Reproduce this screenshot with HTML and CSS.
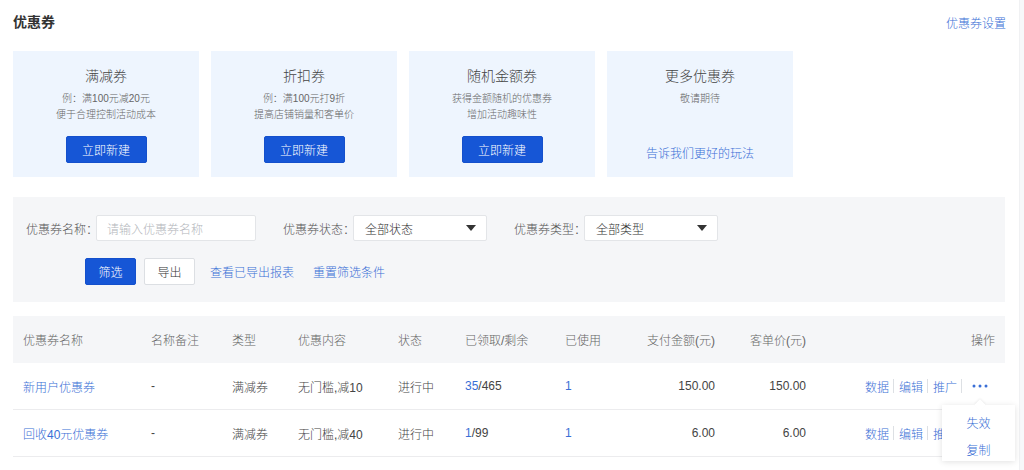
FILE: index.html
```html
<!DOCTYPE html>
<html lang="zh-CN">
<head>
<meta charset="utf-8">
<title>优惠券</title>
<link rel="stylesheet" href="styles.css">
</head>
<body>
<div class="page">
  <main class="main">
    <header class="head">
      <h1 class="title">优惠券</h1>
      <a class="link settings">优惠券设置</a>
    </header>

    <section class="cards">
      <div class="card">
        <div class="card-title">满减券</div>
        <div class="card-desc">例：满100元减20元<br>便于合理控制活动成本</div>
        <button class="btn-primary card-btn">立即新建</button>
      </div>
      <div class="card">
        <div class="card-title">折扣券</div>
        <div class="card-desc">例：满100元打9折<br>提高店铺销量和客单价</div>
        <button class="btn-primary card-btn">立即新建</button>
      </div>
      <div class="card">
        <div class="card-title">随机金额券</div>
        <div class="card-desc">获得金额随机的优惠券<br>增加活动趣味性</div>
        <button class="btn-primary card-btn">立即新建</button>
      </div>
      <div class="card">
        <div class="card-title">更多优惠券</div>
        <div class="card-desc">敬请期待</div>
        <a class="link card-link">告诉我们更好的玩法</a>
      </div>
    </section>

    <section class="filter">
      <div class="filter-row">
        <label class="field">
          <span class="field-label">优惠券名称<span class="colon">：</span></span>
          <span class="input placeholder">请输入优惠券名称</span>
        </label>
        <label class="field">
          <span class="field-label">优惠券状态<span class="colon">：</span></span>
          <span class="select">全部状态<i class="caret"></i></span>
        </label>
        <label class="field">
          <span class="field-label">优惠券类型<span class="colon">：</span></span>
          <span class="select">全部类型<i class="caret"></i></span>
        </label>
      </div>
      <div class="action-row">
        <button class="btn-primary btn-sm">筛选</button>
        <button class="btn-default btn-sm">导出</button>
        <a class="link act-link">查看已导出报表</a>
        <a class="link act-link reset">重置筛选条件</a>
      </div>
    </section>

    <section class="table">
      <div class="tr th">
        <div class="td c1">优惠券名称</div>
        <div class="td c2">名称备注</div>
        <div class="td c3">类型</div>
        <div class="td c4">优惠内容</div>
        <div class="td c5">状态</div>
        <div class="td c6">已领取/剩余</div>
        <div class="td c7">已使用</div>
        <div class="td c8 num">支付金额(元)</div>
        <div class="td c9 num">客单价(元)</div>
        <div class="td c10 num">操作</div>
      </div>
      <div class="tr">
        <div class="td c1"><a class="link">新用户优惠券</a></div>
        <div class="td c2">-</div>
        <div class="td c3">满减券</div>
        <div class="td c4">无门槛,减10</div>
        <div class="td c5">进行中</div>
        <div class="td c6"><a class="link">35</a>/465</div>
        <div class="td c7"><a class="link">1</a></div>
        <div class="td c8 num">150.00</div>
        <div class="td c9 num">150.00</div>
        <div class="td c10 ops">
          <a class="link">数据</a><span class="sep"></span>
          <a class="link">编辑</a><span class="sep"></span>
          <a class="link">推广</a><span class="sep"></span>
          <span class="more">
            <svg width="16" height="4" viewBox="0 0 16 4"><circle cx="2" cy="2" r="1.5"/><circle cx="8" cy="2" r="1.5"/><circle cx="14" cy="2" r="1.5"/></svg>
            <span class="menu">
              <a class="menu-item">失效</a>
              <a class="menu-item">复制</a>
            </span>
          </span>
        </div>
      </div>
      <div class="tr">
        <div class="td c1"><a class="link">回收40元优惠券</a></div>
        <div class="td c2">-</div>
        <div class="td c3">满减券</div>
        <div class="td c4">无门槛,减40</div>
        <div class="td c5">进行中</div>
        <div class="td c6"><a class="link">1</a>/99</div>
        <div class="td c7"><a class="link">1</a></div>
        <div class="td c8 num">6.00</div>
        <div class="td c9 num">6.00</div>
        <div class="td c10 ops">
          <a class="link">数据</a><span class="sep"></span>
          <a class="link">编辑</a><span class="sep"></span>
          <a class="link">推广</a><span class="sep"></span>
          <span class="more more-hidden">
            <svg width="16" height="4" viewBox="0 0 16 4"><circle cx="2" cy="2" r="1.5"/><circle cx="8" cy="2" r="1.5"/><circle cx="14" cy="2" r="1.5"/></svg>
          </span>
        </div>
      </div>
    </section>
  </main>
  <div class="gutter"></div>
</div>
</body>
</html>
```

FILE: styles.css
```css
* { box-sizing: border-box; }
html, body { margin: 0; padding: 0; background: #fff; }
body {
  font-family: "Liberation Sans", "Noto Sans CJK SC", sans-serif;
  font-size: 12px;
  font-weight: 300;
  color: #444;
  overflow: hidden;
}
.page { display: flex; width: 1024px; height: 470px; }
.main { width: 1019px; padding: 0 14px 0 13px; }
.gutter { width: 5px; background: #f7f8fa; border-left: 1px solid #f0f1f3; }

.link { color: #3a6fd6; text-decoration: none; cursor: pointer; }

.head {
  height: 44px;
  display: flex;
  align-items: center;
  justify-content: space-between;
  margin-bottom: 7px;
}
.title { margin: 0; font-size: 14px; font-weight: bold; color: #333; line-height: 20px; }
.settings { font-size: 12px; margin-right: -1px; }

.cards { display: flex; gap: 12px; }
.card {
  width: 186px;
  height: 126px;
  background: #eef5fe;
  display: flex;
  flex-direction: column;
  align-items: center;
  padding-top: 15px;
}
.card-title { font-size: 14px; line-height: 20px; color: #444; }
.card-desc {
  margin-top: 5px;
  font-size: 10px;
  line-height: 16px;
  color: #666;
  text-align: center;
}
.btn-primary {
  background: #1656d6;
  color: #fff;
  border: 1px solid #1450cc;
  border-radius: 2px;
  font-family: inherit;
  font-weight: 300;
  font-size: 12px;
  padding: 0;
  cursor: pointer;
}
.card-btn { width: 81px; height: 27px; margin-top: 13px; }
.card-link { font-size: 12px; line-height: 16px; margin-top: 39px; }

.filter {
  margin-top: 20px;
  background: #f5f6f8;
  height: 105px;
  padding: 18px 13px 0;
}
.filter-row { display: flex; gap: 27px; align-items: center; height: 26px; }
.field { display: flex; align-items: center; }
.field-label { color: #555; font-size: 12px; width: 70px; white-space: nowrap; display: flex; }
.colon { display: inline-block; width: 10px; text-align: center; }
.input, .select {
  height: 26px;
  background: #fff;
  border: 1px solid #e3e5e8;
  border-radius: 2px;
  display: flex;
  align-items: center;
  padding: 0 10px;
  font-size: 12px;
}
.input { width: 160px; }
.placeholder { color: #b3b6bb; }
.select {
  width: 134px;
  justify-content: space-between;
  color: #333;
  padding: 0 10px 0 11px;
}
.caret {
  width: 0; height: 0;
  border-left: 5px solid transparent;
  border-right: 5px solid transparent;
  border-top: 6px solid #333;
}
.action-row {
  display: flex;
  align-items: center;
  margin-top: 17px;
  padding-left: 59px;
  height: 27px;
}
.btn-sm { width: 51px; height: 27px; }
.btn-default {
  background: #fff;
  border: 1px solid #dcdfe3;
  border-radius: 2px;
  color: #333;
  font-family: inherit;
  font-weight: 300;
  font-size: 12px;
  padding: 0;
  margin-left: 8px;
}
.act-link { margin-left: 15px; font-size: 12px; }
.act-link.reset { margin-left: 19px; }

.table { margin-top: 14px; }
.tr {
  display: flex;
  height: 47px;
  align-items: center;
  border-bottom: 1px solid #ececee;
}
.tr.th { background: #f5f6f8; border-bottom: 0; color: #666; }
.td { padding-left: 10px; white-space: nowrap; }
.td.num { text-align: right; padding-left: 0; padding-right: 10px; }
.c1 { width: 128px; }
.c2 { width: 81px; }
.c3 { width: 66px; }
.c4 { width: 100px; }
.c5 { width: 67px; }
.c6 { width: 100px; }
.c7 { width: 70px; }
.c8 { width: 100px; }
.c9 { width: 91px; }
.c10 { width: 189px; padding-right: 14px; }
.ops { display: flex; justify-content: flex-end; align-items: center; }
.sep { width: 1px; height: 14px; background: #dde0e4; margin: 0 5px 0 4px; }
.more {
  position: relative;
  display: flex;
  align-items: center;
  margin-left: 5px;
  margin-right: 3px;
  height: 16px;
}
.more svg { fill: #3a6fd6; display: block; }
.more-hidden { visibility: hidden; }
.menu {
  position: absolute;
  top: 27px;
  left: -30px;
  width: 73px;
  height: 56px;
  background: #fff;
  box-shadow: 0 1px 6px rgba(0, 0, 0, 0.12);
  display: flex;
  flex-direction: column;
  align-items: center;
  padding-top: 6px;
  z-index: 2;
}
.menu::before {
  content: "";
  position: absolute;
  top: -4px;
  left: 34px;
  width: 8px;
  height: 8px;
  background: #fff;
  transform: rotate(45deg);
  box-shadow: -1px -1px 2px rgba(0, 0, 0, 0.06);
}
.menu-item { color: #3a6fd6; font-size: 12px; line-height: 27px; position: relative; }
```
